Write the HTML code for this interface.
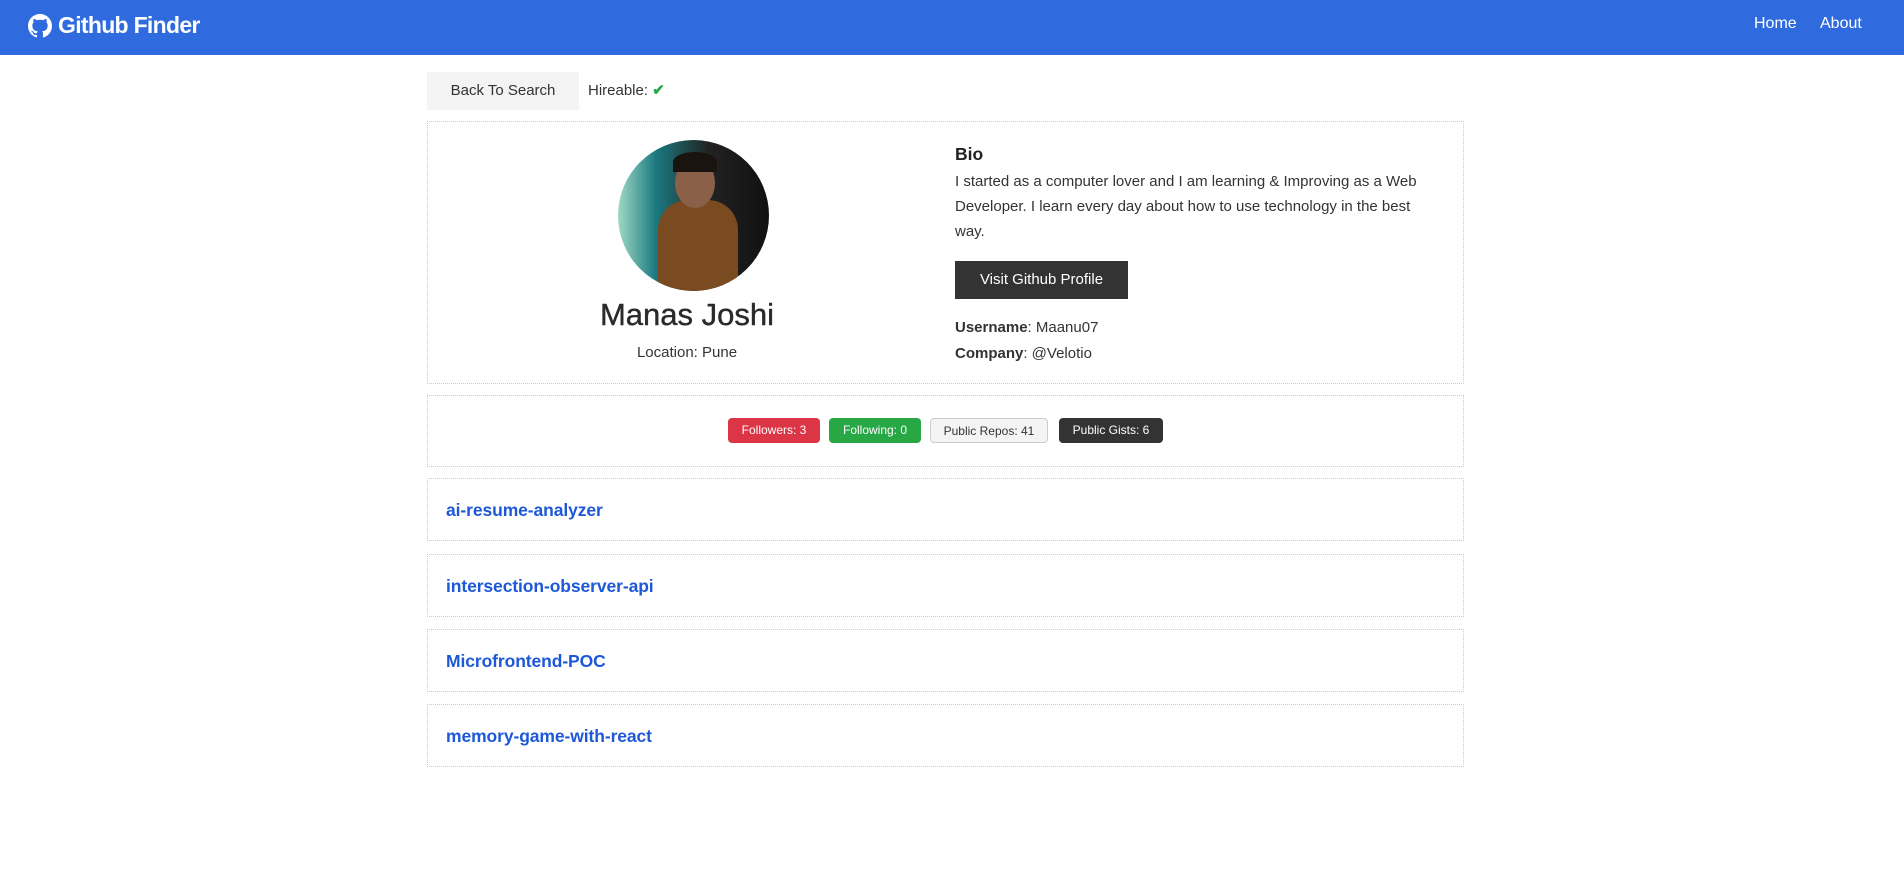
<!DOCTYPE html>
<html><head><meta charset="utf-8"><style>
*{box-sizing:border-box;margin:0;padding:0}
body{width:1904px;height:894px;background:#fff;font-family:"Liberation Sans",sans-serif;color:#333;position:relative;overflow:hidden;font-size:16px}
.nav{position:absolute;left:0;top:0;width:1904px;height:55px;background:#2f6bde;color:#fff}
.brand{position:absolute;left:28px;top:12px;font-size:23px;font-weight:bold;display:flex;align-items:center;gap:6px;letter-spacing:-0.7px}
.links{position:absolute;top:15px;font-size:16px}
.card{position:absolute;left:427px;width:1037px;border:1px dotted #ccc}
.abs{position:absolute;white-space:nowrap}
.badge{position:absolute;top:418px;height:25px;border-radius:4px;font-size:12px;line-height:25px;text-align:center;color:#fff}
.repo{position:absolute;left:18px;top:21px;font-size:17.5px;font-weight:bold;color:#1d58d8;letter-spacing:-0.1px}
</style></head><body>
<div class="nav">
 <div class="brand"><svg width="24" height="24" viewBox="0 0 16 16"><path fill="#fff" d="M8 0C3.58 0 0 3.58 0 8c0 3.54 2.29 6.53 5.47 7.59.4.07.55-.17.55-.38v-1.33c-2.23.48-2.7-1.07-2.7-1.07-.36-.92-.89-1.17-.89-1.17-.73-.5.05-.49.05-.49.8.06 1.23.83 1.23.83.71 1.22 1.87.87 2.330.66.07-.52.28-.87.51-1.07-1.78-.2-3.64-.89-3.64-3.95 0-.87.31-1.59.82-2.15-.08-.2-.36-1.02.08-2.12 0 0 .67-.21 2.2.82A7.6 7.6 0 0 1 8 3.87c.68 0 1.36.09 2 .27 1.53-1.04 2.2-.82 2.2-.82.44 1.1.16 1.92.08 2.12.51.56.82 1.27.82 2.15 0 3.07-1.87 3.75-3.65 3.95.29.25.54.73.54 1.48v2.2c0 .21.15.46.55.38A8 8 0 0 0 16 8c0-4.42-3.58-8-8-8z"/></svg>Github Finder</div>
 <div class="links" style="left:1754px">Home</div>
 <div class="links" style="left:1820px">About</div>
</div>
<div class="abs" style="left:427px;top:72px;width:152px;height:38px;background:#f3f3f3;text-align:center;line-height:38px;font-size:15px">Back To Search</div>
<div class="abs" style="left:588px;top:81px;font-size:15px">Hireable: <span style="color:#28a745;font-weight:bold">✔</span></div>

<div class="card" style="top:121px;height:263px">
 <div class="abs" style="left:190px;top:18px;width:151px;height:151px;border-radius:50%;overflow:hidden;background:linear-gradient(90deg,#9fd8c4 0%,#1a7a80 25%,#222 60%,#111 100%)">
  <div style="position:absolute;left:40px;top:60px;width:80px;height:100px;background:#7a4a20;border-radius:30px 30px 0 0"></div>
  <div style="position:absolute;left:57px;top:18px;width:40px;height:50px;background:#8a6048;border-radius:50%"></div>
  <div style="position:absolute;left:55px;top:12px;width:44px;height:20px;background:#1a1410;border-radius:50% 50% 0 0"></div>
 </div>
 <div class="abs" style="left:0;width:518px;top:175px;text-align:center;font-size:31px;color:#2a2a2a;-webkit-text-stroke:0.4px #2a2a2a">Manas Joshi</div>
 <div class="abs" style="left:0;width:518px;top:222px;text-align:center;font-size:15px">Location: Pune</div>
 <div class="abs" style="left:527px;top:22px;font-size:17.5px;font-weight:bold;color:#222">Bio</div>
 <div class="abs" style="left:527px;top:47px;width:500px;font-size:15px;line-height:25px">I started as a computer lover and I am learning &amp; Improving as a Web<br>Developer. I learn every day about how to use technology in the best<br>way.</div>
 <div class="abs" style="left:527px;top:139px;width:173px;height:38px;background:#333;color:#fff;text-align:center;line-height:38px;font-size:15px">Visit Github Profile</div>
 <div class="abs" style="left:527px;top:197px;font-size:15px"><b>Username</b>: Maanu07</div>
 <div class="abs" style="left:527px;top:223px;font-size:15px"><b>Company</b>: @Velotio</div>
</div>

<div class="card" style="top:395px;height:72px"></div>
<div class="badge" style="left:728px;width:92px;background:#dc3545">Followers: 3</div>
<div class="badge" style="left:829px;width:92px;background:#28a745">Following: 0</div>
<div class="badge" style="left:930px;width:118px;background:#f4f4f4;color:#333;border:1px solid #ccc">Public Repos: 41</div>
<div class="badge" style="left:1059px;width:104px;background:#333">Public Gists: 6</div>

<div class="card" style="top:478px;height:63px"><div class="repo">ai-resume-analyzer</div></div>
<div class="card" style="top:554px;height:63px"><div class="repo">intersection-observer-api</div></div>
<div class="card" style="top:629px;height:63px"><div class="repo">Microfrontend-POC</div></div>
<div class="card" style="top:704px;height:63px"><div class="repo">memory-game-with-react</div></div>
</body></html>
